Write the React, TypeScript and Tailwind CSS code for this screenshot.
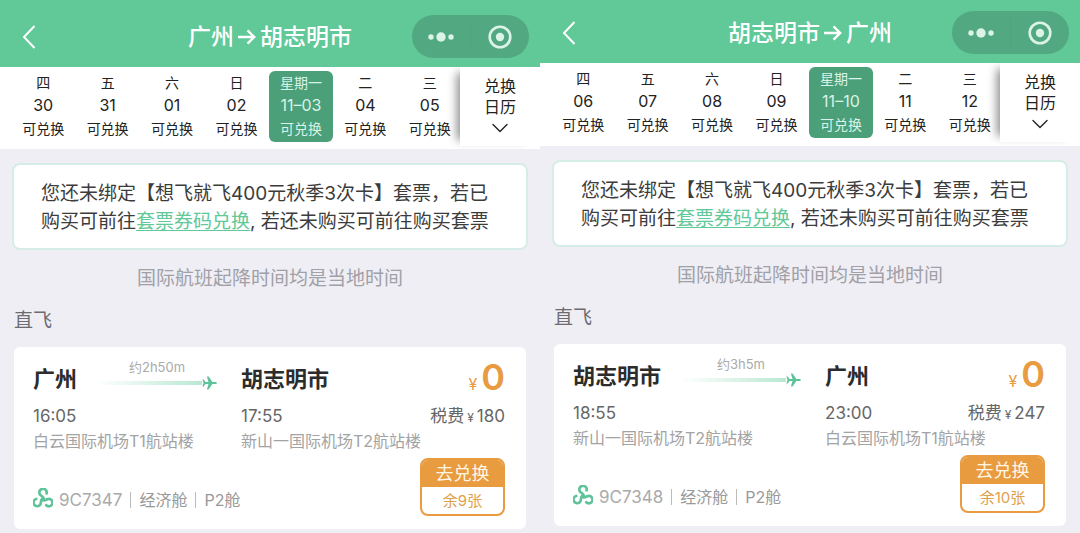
import { ChevronDown } from "lucide-react";
import clsx from "clsx";

type Day = { week: string; date: string; active?: boolean };

type Flight = {
    from: string;
    to: string;
    days: Day[];
    duration: string;
    departTime: string;
    arriveTime: string;
    departAirport: string;
    arriveAirport: string;
    tax: number;
    flightNo: string;
    left: number;
    compact?: boolean;
};

const flights: Flight[] = [
    {
        from: "广州",
        to: "胡志明市",
        days: [
            { week: "四", date: "30" },
            { week: "五", date: "31" },
            { week: "六", date: "01" },
            { week: "日", date: "02" },
            { week: "星期一", date: "11–03", active: true },
            { week: "二", date: "04" },
            { week: "三", date: "05" },
        ],
        duration: "约2h50m",
        departTime: "16:05",
        arriveTime: "17:55",
        departAirport: "白云国际机场T1航站楼",
        arriveAirport: "新山一国际机场T2航站楼",
        tax: 180,
        flightNo: "9C7347",
        left: 9,
    },
    {
        from: "胡志明市",
        to: "广州",
        days: [
            { week: "四", date: "06" },
            { week: "五", date: "07" },
            { week: "六", date: "08" },
            { week: "日", date: "09" },
            { week: "星期一", date: "11–10", active: true },
            { week: "二", date: "11" },
            { week: "三", date: "12" },
        ],
        duration: "约3h5m",
        departTime: "18:55",
        arriveTime: "23:00",
        departAirport: "新山一国际机场T2航站楼",
        arriveAirport: "白云国际机场T1航站楼",
        tax: 247,
        flightNo: "9C7348",
        left: 10,
        compact: true,
    },
];

function PlaneIcon() {
    return (
        <svg width="15" height="14" viewBox="0 0 15 14" fill="#5fc39a" aria-hidden="true">
            <path d="M.4 3.4h1.3l1.8 2.5h3L4.9.6h1.7l3.8 5.3h2.8c1 0 1.7.5 1.7 1.1s-.7 1.1-1.7 1.1h-2.8l-3.8 5.3H4.9l1.6-5.3h-3l-1.8 2.5H.4L1.5 7z" />
        </svg>
    );
}

function SpringLogo() {
    const arm = "M13.6 5.4A3.7 3.7 0 1 0 7 6.6C7.8 8 10.8 8.4 10.8 11";
    return (
        <svg width="20" height="20" viewBox="0 0 20 20" fill="none" stroke="#5fc39a" strokeWidth="2.7" strokeLinecap="round" className="mb-1" aria-hidden="true">
            <path d={arm} />
            <path d={arm} transform="rotate(120 10 11.2)" />
            <path d={arm} transform="rotate(240 10 11.2)" />
        </svg>
    );
}

function Header({ from, to, compact }: Flight) {
    return (
        <header
            className={clsx(
                "grid grid-cols-[1fr_auto_1fr] items-center bg-[#61c898] pr-[11px] pb-[9px] pl-[11px] text-white",
                compact ? "pt-[11px]" : "pt-[15px]",
            )}
        >
            <button aria-label="返回" className="flex h-8 w-9 items-center justify-center">
                <svg width="14" height="24" viewBox="0 0 14 24" fill="none" stroke="currentColor" strokeWidth="2">
                    <path d="M12.5 1 2 12l10.5 11" />
                </svg>
            </button>
            <h1 className="flex items-center gap-1 text-[23px] leading-8 font-medium">
                {from}
                <svg width="18" height="16" viewBox="0 0 18 16" fill="none" stroke="currentColor" strokeWidth="2.4" aria-hidden="true">
                    <path d="M0 8h16M9.5 1.4 16.2 8l-6.7 6.6" />
                </svg>
                {to}
            </h1>
            <div className="flex h-[43px] w-[117px] justify-self-end rounded-full bg-[#52a981]">
                <button aria-label="更多" className="flex flex-1 items-center justify-center">
                    <svg width="26" height="10" viewBox="0 0 26 10" fill="#dcf3e8">
                        <circle cx="3" cy="5" r="2.7" />
                        <circle cx="13" cy="5" r="4.7" />
                        <circle cx="23" cy="5" r="2.7" />
                    </svg>
                </button>
                <span className="my-2 w-px bg-[#4da37b]" />
                <button aria-label="关闭" className="flex flex-1 items-center justify-center">
                    <svg width="24" height="24" viewBox="0 0 24 24" fill="none">
                        <circle cx="12" cy="12" r="10.3" stroke="#dcf3e8" strokeWidth="2.6" />
                        <circle cx="12" cy="12" r="4.2" fill="#dcf3e8" />
                    </svg>
                </button>
            </div>
        </header>
    );
}

function DateStrip({ days, compact }: Flight) {
    return (
        <nav className={clsx("flex overflow-hidden bg-white pl-[11px]", compact ? "pb-1" : "pb-[3px]")}>
            <div className="-mr-[2px] grid flex-1 grid-cols-7 pt-1 pb-1">
                {days.map((day) => (
                    <button
                        key={day.date}
                        className={clsx(
                            "flex flex-col items-center rounded-md text-sm whitespace-nowrap",
                            day.active ? "bg-[#4b9f79] text-[#d9f3e7]" : "text-[#222]",
                        )}
                    >
                        <span className="leading-6">{day.week}</span>
                        <span className="text-base leading-[21px]">{day.date}</span>
                        <span className="leading-[26px]">可兑换</span>
                    </button>
                ))}
            </div>
            <button className="relative flex w-20 flex-col items-center bg-white pt-[9px] text-base leading-[21px] text-[#222] shadow-[-9px_0_9px_-6px_rgba(0,0,0,0.45)]">
                <span>兑换</span>
                <span>日历</span>
                <ChevronDown size={28} strokeWidth={1.2} className="-mt-1" />
            </button>
        </nav>
    );
}

function FlightCard(flight: Flight) {
    return (
        <article className="rounded-md bg-white pt-2 pr-[21px] pb-[13px] pl-[19px]">
            <div className="grid grid-cols-[auto_auto_1fr_auto] items-center whitespace-nowrap text-[#666]">
                <h2 className="text-[22px] leading-[48px] font-bold text-[#2c2c2c]">{flight.from}</h2>
                <div className="mr-6 ml-5 flex w-[120px] flex-col self-start pt-[3px]">
                    <span className="text-center text-[13px] leading-[18px] text-[#aaa]">{flight.duration}</span>
                    <span className="flex items-center">
                        <span className="h-1 flex-1 bg-linear-to-r from-white to-[#b9e8d3]" />
                        <PlaneIcon />
                    </span>
                </div>
                <h2 className="text-[22px] leading-[48px] font-bold text-[#2c2c2c]">{flight.to}</h2>
                <p className="flex items-baseline justify-end gap-1 self-start text-[#e89b3f]">
                    <span className="text-base leading-4">¥</span>
                    <span className="text-4xl leading-[44px] font-semibold">0</span>
                </p>

                <span className="col-span-2 text-[17px] leading-[26px]">{flight.departTime}</span>
                <span className="text-[17px] leading-[26px]">{flight.arriveTime}</span>
                <p className="text-right text-[17px] leading-[26px]">
                    税费<span className="mx-[3px] text-xs">¥</span>
                    {flight.tax}
                </p>

                <span className="col-span-2 text-base leading-6 text-[#a3a3a3]">{flight.departAirport}</span>
                <span className="col-span-2 text-base leading-6 text-[#a3a3a3]">{flight.arriveAirport}</span>
            </div>

            <div className="mt-[5px] flex items-end justify-between">
                <div className="flex items-center pb-1 text-base leading-6 text-[#999]">
                    <SpringLogo />
                    <span className="ml-[6px] text-[17px] text-[#aaa]">{flight.flightNo}</span>
                    <span className="mx-2 h-4 w-px bg-[#bbb]" />
                    <span>经济舱</span>
                    <span className="mx-2 h-4 w-px bg-[#bbb]" />
                    <span>P2舱</span>
                </div>
                <button className="flex w-[85px] flex-col overflow-hidden rounded-lg border-2 border-[#e89b3f] bg-white text-center">
                    <span className="bg-[#e89b3f] text-lg leading-[27px] text-[#fff6e6]">去兑换</span>
                    <span className="text-[15px] leading-[27px] text-[#e0a04c]">余{flight.left}张</span>
                </button>
            </div>
        </article>
    );
}

function FlightPage(flight: Flight) {
    return (
        <section>
            <Header {...flight} />
            <DateStrip {...flight} />
            <div className="mx-3 mt-[14px] rounded-lg border-2 border-[#d6ece6] bg-white px-[27px] pt-[15px] pb-3 text-[19px] leading-7 text-[#3c3c3c]">
                您还未绑定【想飞就飞400元秋季3次卡】套票，若已购买可前往
                <a href="#exchange" className="text-[#61c898] underline underline-offset-2">
                    套票券码兑换
                </a>
                , 若还未购买可前往购买套票
            </div>
            <p className="mt-[15px] text-center text-[19px] leading-7 text-[#a0a0a6]">国际航班起降时间均是当地时间</p>
            <div className="px-[14px] pt-[14px] pb-1">
                <h3 className="mb-3 text-[19px] leading-7 text-[#6b6b70]">直飞</h3>
                <FlightCard {...flight} />
            </div>
        </section>
    );
}

export default function App() {
    return (
        <main className="grid min-h-screen grid-cols-2 bg-[#efeef5] font-['Inter','Noto_Sans_CJK_SC',sans-serif]" lang="zh-CN">
            {flights.map((flight) => (
                <FlightPage key={flight.flightNo} {...flight} />
            ))}
        </main>
    );
}
